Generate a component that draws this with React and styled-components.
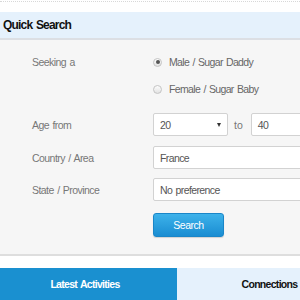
import React from "react";
import styled, { createGlobalStyle } from "styled-components";

const GlobalStyle = createGlobalStyle`
  html, body {
    margin: 0;
    padding: 0;
    background: #fff;
    overflow: hidden;
  }
  body {
    font-family: "Liberation Sans", Arial, sans-serif;
  }
`;

const Page = styled.div`
  width: 362px;
  background: #fff;
`;

const TopRule = styled.div`
  margin-top: 1px;
  height: 10px;
  border-top: 1px dotted #d8d8d8;
`;

const Header = styled.div`
  height: 26px;
  display: flex;
  align-items: center;
  padding-left: 3px;
  background: #e5f1fc;
  border-bottom: 2px solid #dcdfe4;
`;

const HeaderTitle = styled.h2`
  margin: 0;
  font-size: 12px;
  letter-spacing: -0.8px;
  word-spacing: 1px;
  font-weight: 700;
  color: #111;
`;

const Body = styled.div`
  background: #f6f6f6;
  padding: 12px 0 17px 32px;
  border-bottom: 2px solid #dedede;
`;

const Row = styled.div`
  display: flex;
  align-items: ${(p) => (p.top ? "flex-start" : "center")};
  margin-top: ${(p) => p.mt || 0}px;
`;

const Label = styled.div`
  width: 121px;
  flex-shrink: 0;
  font-size: 10.5px;
  letter-spacing: -0.55px;
  word-spacing: 1px;
  line-height: 20px;
  color: #777;
`;

const RadioGroup = styled.div`
  display: flex;
  flex-direction: column;
  gap: 7px;
`;

const RadioOption = styled.label`
  display: flex;
  align-items: center;
  height: 20px;
  font-size: 10.5px;
  letter-spacing: -0.65px;
  word-spacing: 1px;
  color: #666;
  gap: 7px;
`;

const RadioDot = styled.span`
  width: 9px;
  height: 9px;
  border-radius: 50%;
  border: 1px solid #c4c4c4;
  background: linear-gradient(#fdfdfd, #e2e2e2);
  display: flex;
  align-items: center;
  justify-content: center;
  box-sizing: border-box;

  &::after {
    content: "";
    width: 4px;
    height: 4px;
    border-radius: 50%;
    background: ${(p) => (p.checked ? "#555" : "transparent")};
  }
`;

const SelectBox = styled.div`
  position: relative;
  box-sizing: border-box;
  width: ${(p) => p.w}px;
  height: 23px;
  padding-left: 6px;
  display: flex;
  align-items: center;
  background: #fff;
  border: 1px solid #d2d2d2;
  border-radius: 2px;
  font-size: 10.5px;
  letter-spacing: -0.6px;
  word-spacing: 1px;
  color: #555;
`;

const Arrow = styled.span`
  position: absolute;
  right: 6px;
  top: 9px;
  width: 0;
  height: 0;
  border-left: 2.5px solid transparent;
  border-right: 2.5px solid transparent;
  border-top: 4px solid #333;
`;

const ToText = styled.span`
  margin: 0 8px 0 6px;
  font-size: 10.5px;
  color: #777;
`;

const SearchButton = styled.button`
  box-sizing: border-box;
  width: 71px;
  height: 24px;
  margin-left: 121px;
  padding: 0;
  border: 1px solid #1a86c8;
  border-radius: 3px;
  background: linear-gradient(#3db2ea, #1a8dd2);
  box-shadow: 0 1px 1px rgba(0, 0, 0, 0.15);
  color: #fff;
  font-family: inherit;
  font-size: 10.5px;
  letter-spacing: -0.5px;
`;

const Tabs = styled.div`
  margin-top: 12px;
  display: flex;
  height: 32px;
  border-bottom: 2px solid #1a90d0;
`;

const Tab = styled.div`
  width: ${(p) => (p.active ? "177px" : "auto")};
  flex: ${(p) => (p.active ? "none" : "1")};
  box-sizing: border-box;
  padding-right: ${(p) => (p.active ? "7px" : "0")};
  display: flex;
  align-items: center;
  justify-content: center;
  font-size: 10.5px;
  letter-spacing: -0.7px;
  word-spacing: 1px;
  font-weight: 700;
  background: ${(p) => (p.active ? "#1a90d0" : "#e5f1fc")};
  color: ${(p) => (p.active ? "#fff" : "#111")};
`;

const Select = ({ value, w }) => (
  <SelectBox w={w}>
    {value}
    <Arrow />
  </SelectBox>
);

export default function App() {
  return (
    <Page>
      <GlobalStyle />
      <TopRule />
      <Header>
        <HeaderTitle>Quick Search</HeaderTitle>
      </Header>
      <Body>
        <Row top>
          <Label>Seeking a</Label>
          <RadioGroup>
            <RadioOption>
              <RadioDot checked />
              Male / Sugar Daddy
            </RadioOption>
            <RadioOption>
              <RadioDot />
              Female / Sugar Baby
            </RadioOption>
          </RadioGroup>
        </Row>
        <Row mt={14}>
          <Label>Age from</Label>
          <Select value="20" w={75} />
          <ToText>to</ToText>
          <Select value="40" w={75} />
        </Row>
        <Row mt={10}>
          <Label>Country / Area</Label>
          <Select value="France" w={172} />
        </Row>
        <Row mt={9}>
          <Label>State / Province</Label>
          <Select value="No preference" w={172} />
        </Row>
        <Row mt={12}>
          <SearchButton>Search</SearchButton>
        </Row>
      </Body>
      <Tabs>
        <Tab active>Latest Activities</Tab>
        <Tab>Connections</Tab>
      </Tabs>
    </Page>
  );
}
